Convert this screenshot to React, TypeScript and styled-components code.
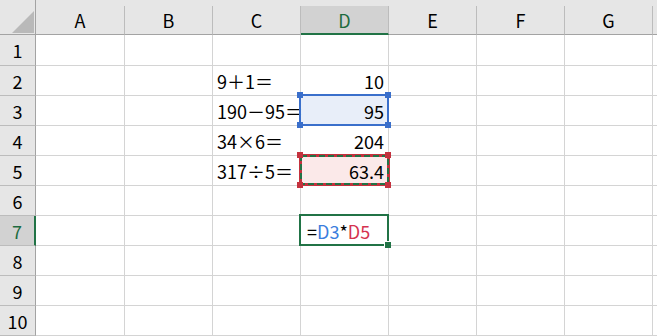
import React from "react";
import styled, { createGlobalStyle, css } from "styled-components";

const FONT = `"Noto Sans CJK JP", "Noto Sans", sans-serif`;

const Global = createGlobalStyle`
  html, body { margin: 0; padding: 0; background: #ffffff; overflow: hidden; }
  body { font-family: ${FONT}; }
`;

const Sheet = styled.div`
  display: grid;
  grid-template-columns: 36px 89px repeat(7, 88px);
  grid-template-rows: 35px 31px repeat(9, 30px);
  width: 657px;
  height: 336px;
  overflow: hidden;
  font-family: ${FONT};
  font-size: 18px;
  color: #000;
  background: #fff;
`;

const Corner = styled.div`
  box-sizing: border-box;
  background: #e6e6e6;
  border-right: 1px solid #a3a3a3;
  border-bottom: 1px solid #a3a3a3;
  display: flex;
  align-items: flex-end;
  justify-content: flex-end;
  padding: 0 1px 1px 0;
`;

const ColHeader = styled.div`
  box-sizing: border-box;
  background: #e6e6e6;
  padding-top: 6px;
  display: flex;
`;

const ColLabel = styled.div<{ $active?: boolean }>`
  flex: 1;
  box-sizing: border-box;
  display: flex;
  align-items: center;
  justify-content: center;
  border-right: 1px solid #bcbcbc;
  border-bottom: 1px solid #a3a3a3;
  background: #e6e6e6;
  color: #000;
  ${(p) =>
    p.$active &&
    css`
      background: #d2d2d2;
      color: #1d6b3f;
      border-bottom: 2px solid #217346;
    `}
`;

const RowHeader = styled.div<{ $active?: boolean }>`
  box-sizing: border-box;
  display: flex;
  align-items: center;
  justify-content: center;
  background: #e6e6e6;
  border-right: 1px solid #a3a3a3;
  border-bottom: 1px solid #bcbcbc;
  color: #000;
  ${(p) =>
    p.$active &&
    css`
      background: #d2d2d2;
      color: #1d6b3f;
      border-right: 2px solid #217346;
    `}
`;

type Tone = "blue" | "red" | undefined;

const Cell = styled.div<{ $right?: boolean; $tone?: Tone }>`
  position: relative;
  box-sizing: border-box;
  min-width: 0;
  display: flex;
  align-items: center;
  justify-content: ${(p) => (p.$right ? "flex-end" : "flex-start")};
  padding: ${(p) => (p.$right ? "0 4px 0 0" : "0 0 0 4px")};
  border-right: 1px solid #d4d4d4;
  border-bottom: 1px solid #d4d4d4;
  white-space: nowrap;
  background: ${(p) =>
    p.$tone === "blue" ? "#e8eef9" : p.$tone === "red" ? "#fbe9e9" : "#ffffff"};
`;

const CellText = styled.span<{ $indent?: boolean }>`
  position: relative;
  z-index: 1;
  padding-left: ${(p) => (p.$indent ? "2px" : "0")};
`;

const Frame = styled.div<{ $color: string }>`
  position: absolute;
  top: -2px;
  left: -2px;
  right: -1px;
  bottom: -1px;
  box-sizing: border-box;
  border: 2px solid ${(p) => p.$color};
  z-index: 2;
  pointer-events: none;
`;

const Handle = styled.div<{ $color: string; $v: "top" | "bottom"; $h: "left" | "right" }>`
  position: absolute;
  width: 6px;
  height: 6px;
  background: ${(p) => p.$color};
  ${(p) => (p.$v === "top" ? "top: -4px;" : "bottom: -4px;")}
  ${(p) => (p.$h === "left" ? "left: -4px;" : "right: -4px;")}
`;

const FillHandle = styled.div`
  position: absolute;
  right: -4px;
  bottom: -4px;
  width: 6px;
  height: 6px;
  background: #217346;
  border-left: 1px solid #fff;
  border-top: 1px solid #fff;
`;

const AntsLayer = styled.svg`
  position: absolute;
  top: -2px;
  left: -2px;
  z-index: 2;
  overflow: visible;
  pointer-events: none;
`;

const Ref = styled.span<{ $c: string }>`
  color: ${(p) => p.$c};
`;

const COLS = ["A", "B", "C", "D", "E", "F", "G", "H"];

type CellData = {
  text?: React.ReactNode;
  right?: boolean;
  tone?: Tone;
  kind?: "blue" | "red" | "active";
};

const rowData: Record<number, Record<string, CellData>> = {
  2: { C: { text: "9＋1＝" }, D: { text: "10", right: true } },
  3: { C: { text: "190－95＝" }, D: { text: "95", right: true, tone: "blue", kind: "blue" } },
  4: { C: { text: "34×6＝" }, D: { text: "204", right: true } },
  5: { C: { text: "317÷5＝" }, D: { text: "63.4", right: true, tone: "red", kind: "red" } },
  7: {
    D: {
      text: (
        <>
          =<Ref $c="#3b7ddd">D3</Ref>*<Ref $c="#d5334f">D5</Ref>
        </>
      ),
      kind: "active",
    },
  },
};

const BLUE = "#3a6fcb";
const RED = "#c4323e";

function Corners({ color }: { color: string }) {
  return (
    <>
      <Handle $color={color} $v="top" $h="left" />
      <Handle $color={color} $v="top" $h="right" />
      <Handle $color={color} $v="bottom" $h="left" />
      <Handle $color={color} $v="bottom" $h="right" />
    </>
  );
}

function Overlay({ kind }: { kind?: CellData["kind"] }) {
  if (kind === "blue") {
    return (
      <Frame $color={BLUE}>
        <Corners color={BLUE} />
      </Frame>
    );
  }
  if (kind === "red") {
    return (
      <>
        <AntsLayer width="91" height="32" viewBox="0 0 91 32">
          <rect x="1.5" y="1.5" width="88" height="29" fill="none" stroke={RED} strokeWidth="3" />
          <rect
            x="2"
            y="2"
            width="87"
            height="28"
            fill="none"
            stroke="#217346"
            strokeWidth="2"
            strokeDasharray="6 3"
          />
        </AntsLayer>
        <Frame $color="transparent">
          <Corners color={RED} />
        </Frame>
      </>
    );
  }
  if (kind === "active") {
    return (
      <Frame $color="#217346">
        <FillHandle />
      </Frame>
    );
  }
  return null;
}

function CornerTriangle() {
  return (
    <svg width="22" height="22" viewBox="0 0 22 22">
      <polygon points="22,0 22,22 0,22" fill="#b9b9b9" />
    </svg>
  );
}

export default function App() {
  const rows = Array.from({ length: 10 }, (_, i) => i + 1);
  return (
    <>
      <Global />
      <Sheet>
        <Corner>
          <CornerTriangle />
        </Corner>
        {COLS.map((c) => (
          <ColHeader key={c}>
            <ColLabel $active={c === "D"}>{c === "H" ? "" : c}</ColLabel>
          </ColHeader>
        ))}
        {rows.map((r) => (
          <React.Fragment key={r}>
            <RowHeader $active={r === 7}>{r}</RowHeader>
            {COLS.map((c) => {
              const d = rowData[r]?.[c];
              return (
                <Cell key={c} $right={d?.right} $tone={d?.tone}>
                  {d?.text !== undefined && (
                    <CellText $indent={d.kind === "active"}>{d.text}</CellText>
                  )}
                  <Overlay kind={d?.kind} />
                </Cell>
              );
            })}
          </React.Fragment>
        ))}
      </Sheet>
    </>
  );
}
